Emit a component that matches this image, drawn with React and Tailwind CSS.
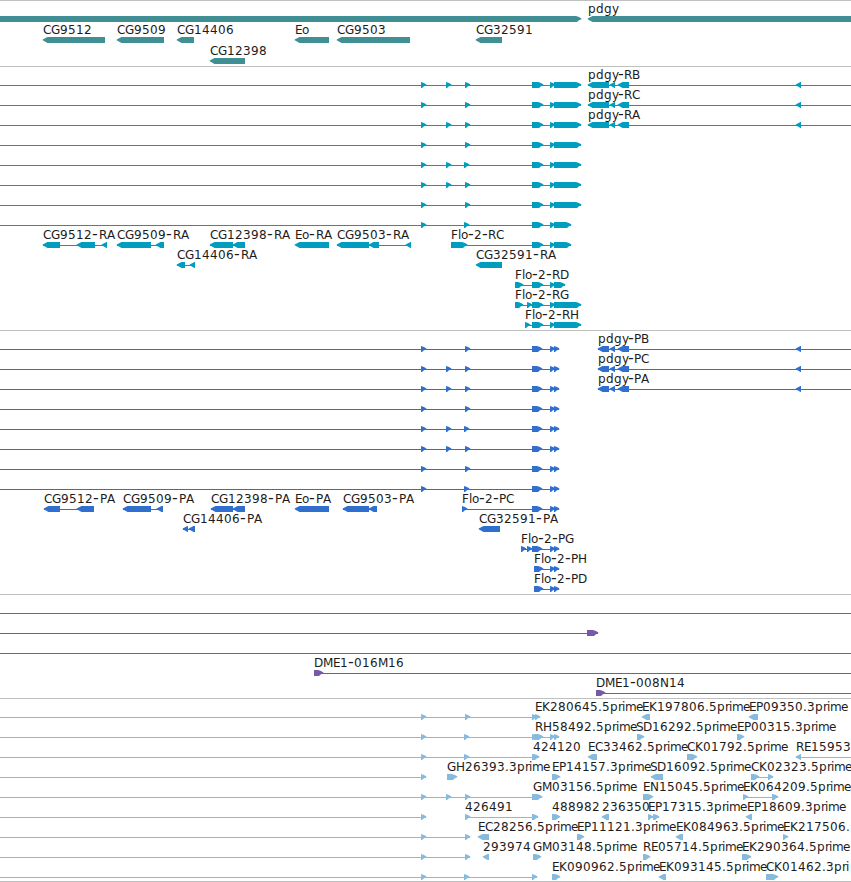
import { Fragment } from "react";

const ADVANCE = {
  C: 8, G: 9, E: 7, R: 8, A: 8, F: 7, B: 7, P: 7, D: 9, M: 10, H: 9, K: 8, S: 7, N: 9,
  o: 7, l: 3, p: 8, d: 8, g: 8, y: 6, r: 4, i: 3, m: 11, e: 6, "-": 6, ".": 4,
};

// Whole-pixel pen positions, one per character.
function penPositions(text, start) {
  const wideDash = /^(CG|Eo)/.test(text);
  let x = start;
  return [...text].map((c) => {
    const here = x;
    x += c === "-" && wideDash ? 7 : ADVANCE[c] ?? 8;
    return here;
  });
}

// A feature: label, line extent and exon blocks (start, end), all in one direction.
const f = (label, dir, exons, extra = {}) => ({ label, dir, exons, ...extra });
const L = -1;
const R = 1;

const E1 = [421, 426];
const E2 = [446, 451];
const E3 = [465, 470];
const E3b = [464, 469];
const T4 = [532, 543];
const E5 = [550, 555];
const LONG = [554, 581];
const MID = [554, 571];
const TAIL = [[532, 542], E5, [554, 559]];
const pdgyR = (s) => f(`pdgy-R${s}`, L, [[588, 609], [610, 615], [618, 629], [796, 801]], { to: 851 });
const pdgyP = (s) => f(`pdgy-P${s}`, L, [[598, 609], [610, 615], [618, 629], [796, 801]], { to: 851 });
const flo = (...exons) => f("", R, exons, { from: 0 });

const TRACKS = [
  {
    height: 66, color: "#3f8f94",
    rows: [
      [16, f("", R, [[-10, 581]]), f("pdgy", L, [[588, 870]])],
      [37, f("CG9512", L, [[43, 105]]), f("CG9509", L, [[117, 164]]), f("CG14406", L, [[177, 194]]),
        f("Eo", L, [[295, 329]]), f("CG9503", L, [[337, 410]]), f("CG32591", L, [[476, 502]])],
      [58, f("CG12398", L, [[210, 245]])],
    ],
  },
  {
    height: 264, color: "#009dbf",
    rows: [
      [16, flo(E1, E2, E3, T4, E5, LONG), pdgyR("B")],
      [36, flo(E1, E3, T4, E5, LONG), pdgyR("C")],
      [56, flo(E1, E2, E3, T4, E5, LONG), pdgyR("A")],
      [76, flo(E1, E3, T4, E5, LONG)],
      [96, flo(E1, E2, E3b, T4, E5, LONG)],
      [116, flo(E1, E2, E3, T4, E5, LONG)],
      [136, flo(E1, E3, T4, E5, LONG)],
      [156, flo(E1, E3b, T4, E5, MID)],
      [176, f("CG9512-RA", L, [[43, 60], [77, 95], [102, 107]]), f("CG9509-RA", L, [[117, 151], [156, 164]]),
        f("CG12398-RA", L, [[210, 233], [233, 245]]), f("Eo-RA", L, [[295, 329]]),
        f("CG9503-RA", L, [[337, 369], [369, 379], [406, 411]]), f("Flo-2-RC", R, [[451, 467], T4, E5, MID])],
      [196, f("CG14406-RA", L, [[177, 185], [190, 195]]), f("CG32591-RA", L, [[476, 502]])],
      [216, f("Flo-2-RD", R, [[515, 523], T4, E5, [554, 565]])],
      [236, f("Flo-2-RG", R, [[515, 523], [527, 532], T4, E5, LONG])],
      [256, f("Flo-2-RH", R, [[525, 530], T4, E5, LONG])],
    ],
  },
  {
    height: 264, color: "#316fce",
    rows: [
      [16, flo(E1, E3, ...TAIL), pdgyP("B")],
      [36, flo(E1, E2, E3, ...TAIL), pdgyP("C")],
      [56, flo(E1, E2, E3, ...TAIL), pdgyP("A")],
      [76, flo(E1, E3, ...TAIL)],
      [96, flo(E1, E2, E3b, ...TAIL)],
      [116, flo(E1, E2, E3, ...TAIL)],
      [136, flo(E1, E3, ...TAIL)],
      [156, flo(E1, E3b, ...TAIL)],
      [176, f("CG9512-PA", L, [[44, 60], [77, 94]]), f("CG9509-PA", L, [[123, 151], [157, 163]]),
        f("CG12398-PA", L, [[211, 233], [233, 245]]), f("Eo-PA", L, [[295, 329]]),
        f("CG9503-PA", L, [[343, 369], [369, 377]]), f("Flo-2-PC", R, [[462, 467], ...TAIL])],
      [196, f("CG14406-PA", L, [[183, 188], [189, 195]]), f("CG32591-PA", L, [[479, 500]])],
      [216, f("Flo-2-PG", R, [[521, 526], [527, 532], ...TAIL])],
      [236, f("Flo-2-PH", R, [[534, 543], E5, [554, 559]])],
      [256, f("Flo-2-PD", R, [[534, 543], E5, [554, 559]])],
    ],
  },
  {
    height: 104, color: "#7659a8",
    rows: [
      [16, f("", R, [], { from: 0, to: 851 })],
      [36, f("", R, [[587, 598]], { from: 0 })],
      [56, f("", R, [], { from: 0, to: 851 })],
      [76, f("DME1-016M16", R, [[314, 323]], { to: 851 })],
      [96, f("DME1-008N14", R, [[596, 605]], { to: 851 })],
    ],
  },
  {
    height: 183, color: "#87bbdd",
    rows: [
      [16, f("EK280645.5prime", R, [E1, E3, [532, 537], [535, 540]], { from: 0, at: 535 }),
        f("EK197806.5prime", L, [[642, 650]]), f("EP09350.3prime", L, [[749, 758]])],
      [36, f("RH58492.5prime", R, [E1, E3b, [532, 537], [534, 543], E5, [554, 559]], { from: 0, at: 535 }),
        f("SD16292.5prime", R, [[637, 644]], { at: 636 }), f("EP00315.3prime", R, [[737, 744]])],
      [56, f("424120", R, [E1, E3b, [532, 539]], { from: 0, at: 533 }), f("EC33462.5prime", L, [[588, 597]]),
        f("CK01792.5prime", R, [[687, 697]]), f("RE15953", L, [[796, 801]], { to: 851 })],
      [76, flo(E1), f("GH26393.3prime", R, [[447, 457]]), f("EP14157.3prime", R, [[552, 560]]),
        f("SD16092.5prime", L, [[651, 663]], { at: 650 }), f("CK02323.5prime", R, [[751, 759], [768, 773]])],
      [96, f("GM03156.5prime", R, [E1, E2, E3, [532, 542]], { from: 0, at: 533 }),
        f("EN15045.5prime", R, [[643, 653]]), f("EK064209.5prime", R, [[743, 748], [772, 778]])],
      [116, flo(E1), f("426491", R, [E3, [532, 538]]), f("488982", R, [[552, 560]]), f("236350", L, [[602, 609]]),
        f("EP17315.3prime", R, [[648, 653], [653, 659]]), f("EP18609.3prime", L, [[746, 752]], { at: 747 })],
      [136, flo(E1, E3), f("EC28256.5prime", L, [[478, 489]]), f("EP11121.3prime", R, [[577, 584]]),
        f("EK084963.5prime", L, [[676, 683]]), f("EK217506.", R, [[783, 788]])],
      [156, flo(E1, E3), f("293974", L, [[483, 489]]), f("GM03148.5prime", R, [[533, 541]]),
        f("RE05714.5prime", R, [[643, 650]]), f("EK290364.5prime", R, [[742, 751]])],
      [176, flo(E1, E3b, [532, 537]), f("EK090962.5prime", R, [[552, 560]]),
        f("EK093145.5prime", L, [[659, 666]]), f("CK01462.3pri", R, [[766, 778]])],
    ],
  },
];

// Six pixel tall block with a five pixel arrow head.
function exonPath([a, b], dir, y) {
  return dir > 0
    ? `M${a} ${y}H${b - 5}L${b - 2} ${y + 1}L${b + 0.4} ${y + 2.5}V${y + 3.2}L${b - 2} ${y + 4.3}L${b - 4} ${y + 6}H${a}Z`
    : `M${b} ${y}H${a + 4.5}L${a - 0.3} ${y + 2.5}V${y + 3.2}L${a + 4.5} ${y + 6}H${b}Z`;
}

// Label text; hyphens are set larger so that they read as long, raised dashes.
function Label({ text, x, y }) {
  const pens = penPositions(text, x);
  let pos = 0;
  return (
    <text y={y} fill="#1c1c1c">
      {text.split(/(-)/).map((part, i) => {
        const xs = pens.slice(pos, pos + part.length).join(" ");
        pos += part.length;
        return (
          <Fragment key={i}>
            {part === "-" ? <tspan x={xs} className="text-[16px]">-</tspan> : <tspan x={xs}>{part}</tspan>}
          </Fragment>
        );
      })}
    </text>
  );
}

function Feature({ y, feature, color }) {
  const { label, dir, exons, from, to, at } = feature;
  const start = from ?? exons[0][0];
  const end = to ?? exons[exons.length - 1][1];
  const isLine = exons.length !== 1 || from !== undefined || to !== undefined;
  return (
    <g>
      {isLine && <rect x={start} y={y + 3} width={end - start} height="1" fill={color} />}
      {exons.map((e, i) => <path key={i} d={exonPath(e, dir, y)} fill={color} />)}
      {label && <Label text={label} x={at ?? exons[0][0]} y={y - 3} />}
    </g>
  );
}

function Track({ height, color, rows }) {
  return (
    <section className="w-full">
      <svg
        width="851"
        height={height}
        className="block overflow-visible font-['DejaVu_Sans',sans-serif] text-[12px]"
      >
        <rect width="851" height="1" fill="#c0c0c0" />
        {rows.map(([y, ...features]) =>
          features.map((feature, i) => <Feature key={`${y}-${i}`} y={y} feature={feature} color={color} />)
        )}
      </svg>
    </section>
  );
}

export default function App() {
  return (
    <main className="flex h-[882px] w-[851px] flex-col overflow-hidden bg-white">
      {TRACKS.map((track, i) => <Track key={i} {...track} />)}
      <div className="h-px w-full bg-[#c0c0c0]" />
    </main>
  );
}
